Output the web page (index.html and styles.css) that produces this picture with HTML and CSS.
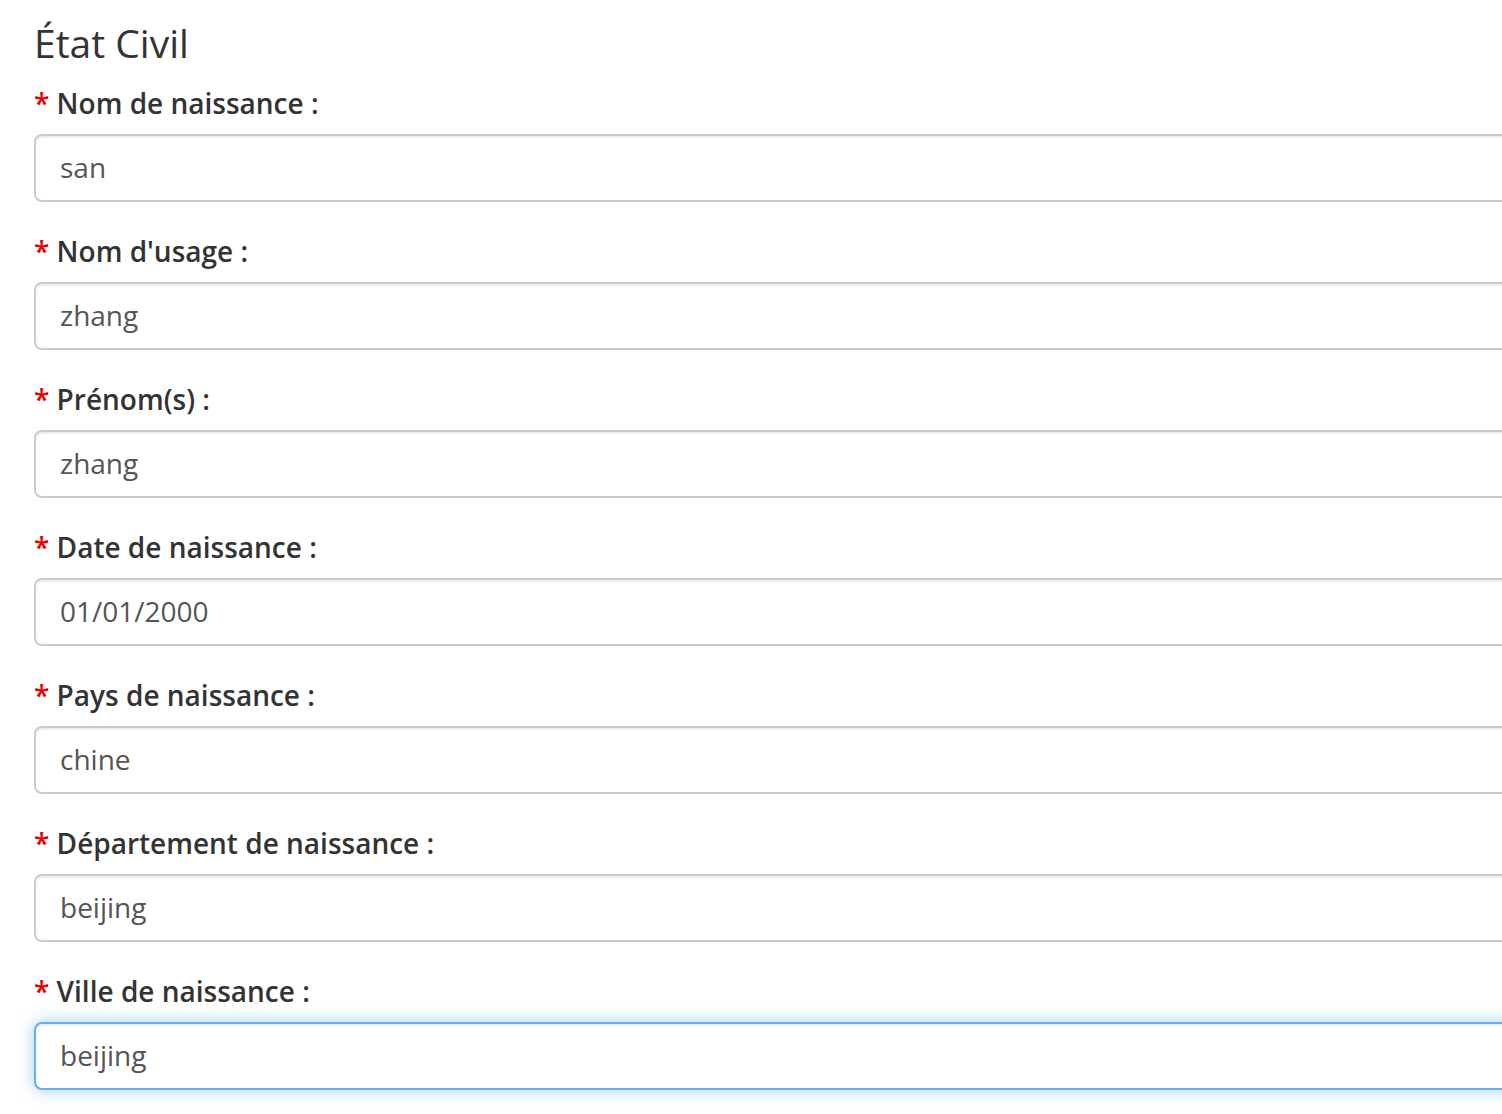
FILE: index.html
```html
<!DOCTYPE html>
<html lang="fr">
<head>
<meta charset="utf-8">
<title>État Civil</title>
<link rel="stylesheet" href="styles.css">
</head>
<body>
<div class="page">
  <h4 class="title">État Civil</h4>
  <form class="form">
    <div class="group">
      <label class="label"><span class="req">*</span> Nom de naissance :</label>
      <input class="field" type="text" value="san">
    </div>
    <div class="group">
      <label class="label"><span class="req">*</span> Nom d'usage :</label>
      <input class="field" type="text" value="zhang">
    </div>
    <div class="group">
      <label class="label"><span class="req">*</span> Prénom(s) :</label>
      <input class="field" type="text" value="zhang">
    </div>
    <div class="group">
      <label class="label"><span class="req">*</span> Date de naissance :</label>
      <input class="field" type="text" value="01/01/2000">
    </div>
    <div class="group">
      <label class="label"><span class="req">*</span> Pays de naissance :</label>
      <input class="field" type="text" value="chine">
    </div>
    <div class="group">
      <label class="label"><span class="req">*</span> Département de naissance :</label>
      <input class="field" type="text" value="beijing">
    </div>
    <div class="group">
      <label class="label"><span class="req">*</span> Ville de naissance :</label>
      <input class="field field-focus" type="text" value="beijing">
    </div>
  </form>
</div>
</body>
</html>
```
FILE: styles.css
```css
html, body {
  margin: 0;
  padding: 0;
  overflow: hidden;
  background: #fff;
}
body {
  font-family: "Open Sans", "Liberation Sans", sans-serif;
  color: #333;
  width: 1502px;
  height: 1114px;
}
.page {
  padding-left: 34px;
  width: 1520px;
}
.title {
  margin: 22px 0 19px 0;
  font-size: 39px;
  font-weight: 400;
  line-height: 1.1;
  color: #333;
}
.form {
  display: flex;
  flex-direction: column;
}
.group {
  display: flex;
  flex-direction: column;
  margin-bottom: 30px;
}
.label {
  display: block;
  font-size: 28px;
  line-height: 38px;
  font-weight: 600;
  margin-bottom: 12px;
}
.req {
  color: #e00;
}
.field {
  box-sizing: border-box;
  display: block;
  width: 100%;
  height: 68px;
  padding: 11px 24px 13px;
  font-family: "Open Sans", "Liberation Sans", sans-serif;
  font-size: 28px;
  line-height: 40px;
  color: #555;
  background: #fff;
  border: 2px solid #ccc;
  border-radius: 8px;
  box-shadow: inset 0 2px 2px rgba(0,0,0,.075);
  outline: none;
}
.field-focus {
  border-color: #66afe9;
  box-shadow: inset 0 2px 2px rgba(0,0,0,.075), 0 0 16px rgba(102,175,233,.6);
}
```
